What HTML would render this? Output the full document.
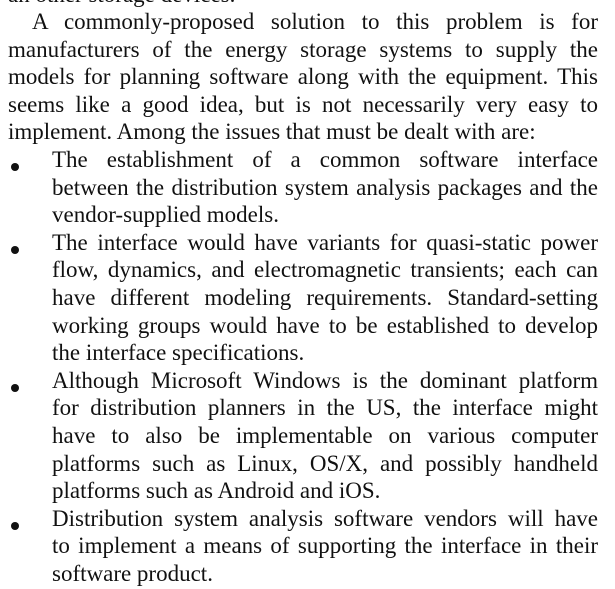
<!DOCTYPE html>
<html><head><meta charset="utf-8"><style>
html,body{margin:0;padding:0;background:#fff;}
body{width:615px;height:589px;overflow:hidden;position:relative;font-family:"Liberation Serif",serif;font-size:23px;color:#111;}
.l{position:absolute;left:8px;width:590px;height:28px;line-height:28px;text-align:justify;text-align-last:justify;white-space:normal;}
.b{left:52px;width:546px;}
.n{text-align-last:left;}
.dot{position:absolute;left:11px;width:8px;height:8px;border-radius:50%;background:#111;}
</style></head><body>
<div class="l n" style="top:-19px">an other storage devices.</div>
<div class="l" style="top:8px;padding-left:24px;width:566px">A commonly-proposed solution to this problem is for</div>
<div class="l" style="top:35.6px">manufacturers of the energy storage systems to supply the</div>
<div class="l" style="top:63.2px">models for planning software along with the equipment. This</div>
<div class="l" style="top:90.8px">seems like a good idea, but is not necessarily very easy to</div>
<div class="l n" style="top:118.4px">implement. Among the issues that must be dealt with are:</div>

<div class="dot" style="top:163px"></div>
<div class="l b" style="top:146px">The establishment of a common software interface</div>
<div class="l b" style="top:173.6px">between the distribution system analysis packages and the</div>
<div class="l b n" style="top:201.2px">vendor-supplied models.</div>

<div class="dot" style="top:246px"></div>
<div class="l b" style="top:228.8px">The interface would have variants for quasi-static power</div>
<div class="l b" style="top:256.4px">flow, dynamics, and electromagnetic transients; each can</div>
<div class="l b" style="top:284px">have different modeling requirements. Standard-setting</div>
<div class="l b" style="top:311.6px">working groups would have to be established to develop</div>
<div class="l b n" style="top:339.2px">the interface specifications.</div>

<div class="dot" style="top:384px"></div>
<div class="l b" style="top:366.8px">Although Microsoft Windows is the dominant platform</div>
<div class="l b" style="top:394.4px">for distribution planners in the US, the interface might</div>
<div class="l b" style="top:422px">have to also be implementable on various computer</div>
<div class="l b" style="top:449.6px">platforms such as Linux, OS/X, and possibly handheld</div>
<div class="l b n" style="top:477.2px">platforms such as Android and iOS.</div>

<div class="dot" style="top:522px"></div>
<div class="l b" style="top:504.8px">Distribution system analysis software vendors will have</div>
<div class="l b" style="top:532.4px">to implement a means of supporting the interface in their</div>
<div class="l b n" style="top:560px">software product.</div>
</body></html>
